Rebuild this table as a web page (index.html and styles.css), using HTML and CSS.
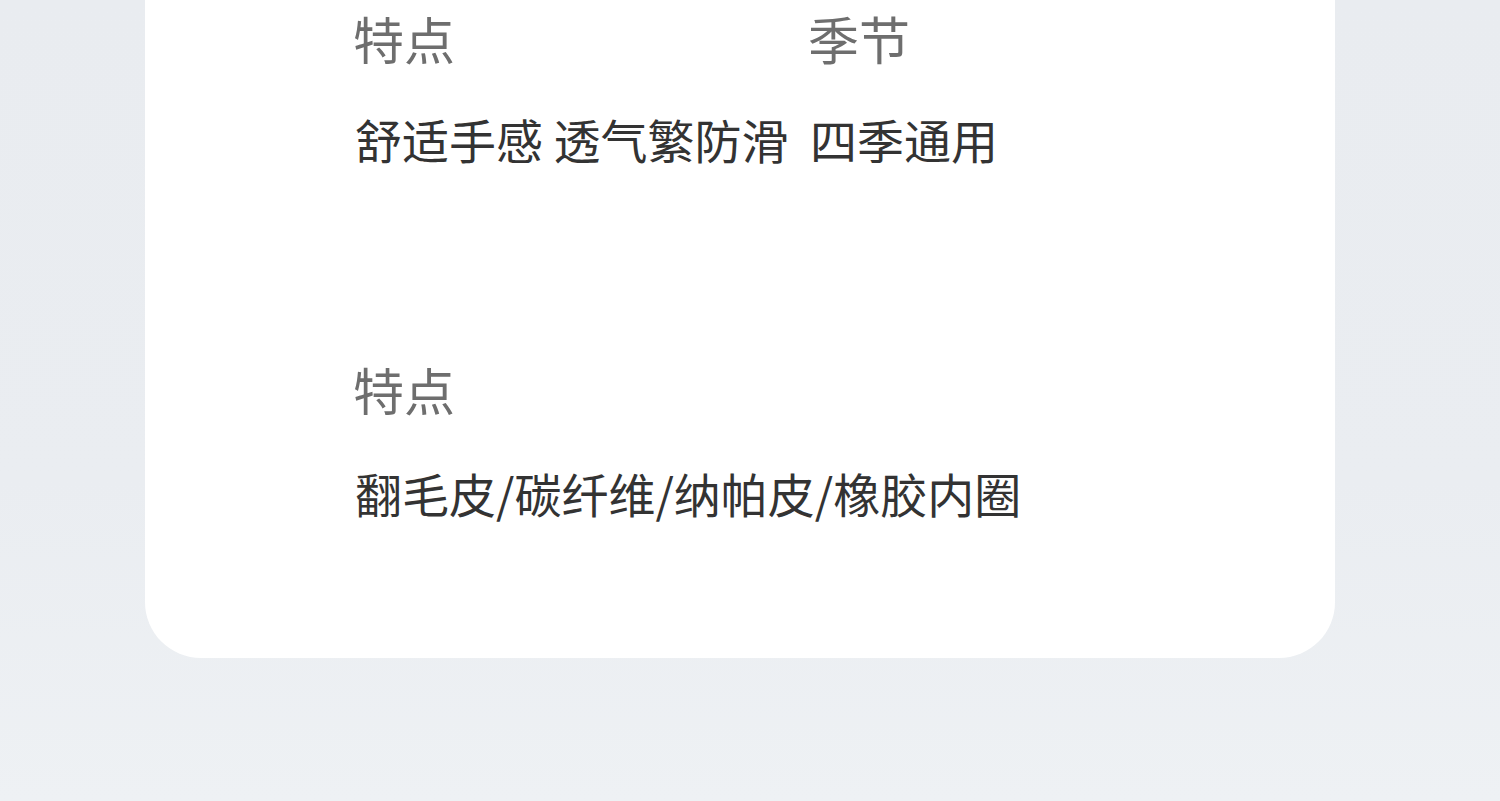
FILE: index.html
```html
<!DOCTYPE html>
<html lang="zh-CN">
<head>
<meta charset="utf-8">
<title>商品参数</title>
<link rel="stylesheet" href="styles.css">
</head>
<body>
<main class="page">
  <section class="card">
    <div class="spec-row">
      <div class="spec">
        <div class="spec-label">特点</div>
        <div class="spec-value">舒适手感 透气繁防滑</div>
      </div>
      <div class="spec">
        <div class="spec-label">季节</div>
        <div class="spec-value">四季通用</div>
      </div>
    </div>
    <div class="spec-row spec-row-wide">
      <div class="spec">
        <div class="spec-label">特点</div>
        <div class="spec-value spec-value-far">翻毛皮/碳纤维/纳帕皮/橡胶内圈</div>
      </div>
    </div>
  </section>
</main>
</body>
</html>
```

FILE: styles.css
```css
html, body {
  margin: 0;
  padding: 0;
}

body {
  width: 1500px;
  height: 801px;
  overflow: hidden;
  background: linear-gradient(180deg, #e9ecf0 0%, #eaedf1 60%, #eef1f4 100%);
  font-family: "Noto Sans CJK SC", "Noto Sans", sans-serif;
}

.page {
  padding-left: 145px;
}

.card {
  width: 1190px;
  box-sizing: border-box;
  padding: 10px 210px 137px;
  background: #ffffff;
  border-radius: 0 0 56px 56px;
}

.spec-row {
  display: grid;
  grid-template-columns: 455px auto;
}

.spec-row-wide {
  grid-template-columns: auto;
  margin-top: 194px;
}

.spec-label,
.spec-value {
  line-height: 56px;
  white-space: nowrap;
}

.spec-label {
  font-size: 51px;
  color: #6e6e6e;
  margin-left: -2px;
}

.spec-value {
  font-size: 47px;
  margin-top: 45px;
  color: #333333;
}

.spec-value-far {
  margin-top: 48px;
}
```
